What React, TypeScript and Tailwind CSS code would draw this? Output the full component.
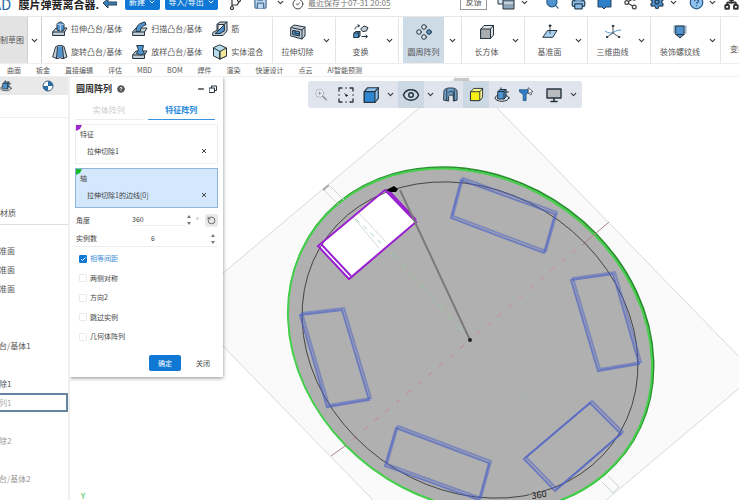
import React, { useState } from "react";
import {
  ChevronDown,
  CircleCheck,
  CircleHelp,
  Eye,
  Minus,
  Network,
  Printer,
  RotateCcw,
  Save,
  Search,
  Settings,
  Share2,
} from "lucide-react";

const INK = "#26343f";
const BLUE = "#4f93cf";
const PALE = "#c3cdd6";

type IconProps = { className?: string };

function Glyph({ className = "size-4", children }: { className?: string; children: React.ReactNode }) {
  return (
    <svg viewBox="0 0 16 16" className={`${className} shrink-0`} fill="none" stroke={INK} strokeWidth="1" strokeLinejoin="round" strokeLinecap="round" aria-hidden="true">
      {children}
    </svg>
  );
}

const Base = () => <path d="M1 10.5 4 7h11l-2.5 4v3.5H1z M1 11h11.5" fill={PALE} />;

const ExtrudeIcon = () => (
  <Glyph>
    <Base />
    <path d="M5 3v6l4 1.3L12 9V3L9 1z" fill={BLUE} />
    <path d="M5 3l3.5 1L12 3 M8.5 4v6" stroke="#dcebf8" strokeWidth=".7" />
  </Glyph>
);
const RevolveIcon = () => (
  <Glyph>
    <path d="M4 2.5C6 1 10 1 12 2.5L15 13l-4 1.7-3-1-3 1L1 13z" fill={PALE} />
    <path d="M6 2.5h4l1.5 11-3.5-.8-3.5.8z" fill={BLUE} stroke="none" />
    <path d="M5.5 3 4.5 14 M10.5 3l1 11" />
  </Glyph>
);
const SweepIcon = () => (
  <Glyph>
    <Base />
    <path d="M4 10c0-5 3-8 9-9l1 3c-4 .7-5.500 3-5.500 6z" fill={BLUE} />
  </Glyph>
);
const LoftIcon = () => (
  <Glyph>
    <Base />
    <path d="M5 1.500h6.500L10.500 6l2 3.500-4 1.500-4-1.500 1.800-3.500z" fill={BLUE} />
  </Glyph>
);
const RibIcon = () => (
  <Glyph>
    <path d="M1 11.500 5 9V3l3-2h7v9l-4 4.500H1z" fill={PALE} />
    <path d="M6 10V3.500h6V10z" fill="#eef2f5" />
    <path d="M12 4 6 10l-3 2.500h5L12 10z" fill={BLUE} />
    <path d="M12 3.500 15 1" />
  </Glyph>
);
const BlendIcon = () => (
  <Glyph>
    <path d="M8 1 14.500 4v8L8 15 1.500 12V4z" fill="#b9dcea" />
    <path d="M8 7.500 14.500 4v8L8 15z" fill="#f1e597" />
    <path d="M1.500 4 8 7.500V15" />
  </Glyph>
);
const CutIcon = () => (
  <Glyph>
    <path d="M1 3.500 4 1l11 2v9l-3 3L1 12z" fill={PALE} />
    <path d="M1 3.500 12 6v9 M12 6l3-3" />
    <path d="M3 6.500l6.500 1.200V12L3 10.700z" fill={BLUE} />
    <path d="M5 7v2.300l4.500.8" />
  </Glyph>
);
const TransformIcon = () => (
  <Glyph>
    <path d="M1 9l1.500-1.500H7V12L5.500 13.500H1z M1 9h4.500v4.500 M5.500 9 7 7.500" fill={BLUE} />
    <path d="M8 4.500 11 2l4 1.500L13.500 7 10 7.500z" fill={PALE} />
    <path d="M2 5c.5-2 2-3 4-3.300 M5 .8l1.500.7-1 1.500 M9 12.500h5 M12.800 11l1.700 1.500-1.700 1.500" />
  </Glyph>
);
const CircularIcon = () => (
  <Glyph>
    <circle cx="8" cy="3" r="2.300" fill="#dce5ec" />
    <circle cx="3" cy="8" r="2.300" fill="#dce5ec" />
    <circle cx="13" cy="8" r="2.300" fill={BLUE} />
    <circle cx="8" cy="13" r="2.300" fill="#dce5ec" />
  </Glyph>
);
const BoxIcon = ({ className, front = "#a9adb0", top = "#dde0e2" }: IconProps & { front?: string; top?: string }) => (
  <Glyph className={className}>
    <path d="M2 5 5 1.500h9.500V11L11.500 14.500H2z" fill={top} />
    <path d="M2 5h9.500v9.500H2z" fill={front} />
    <path d="M11.500 5 14.500 1.500" />
  </Glyph>
);
const PlaneIcon = () => (
  <Glyph>
    <path d="M1 13 5.500 6.500H15L11 13z" fill="#a9d0ef" />
    <path d="M8 9.500V2" strokeWidth=".8" />
    <circle cx="8" cy="1.700" r=".9" fill={INK} />
  </Glyph>
);
const CurveIcon = () => (
  <Glyph>
    <path d="M0 7c4 3 7 2 9 1s4-2 7-2" stroke={BLUE} />
    <path d="M8 2v7l-6 4 M8 9l6 4" strokeWidth=".8" />
    <circle cx="8" cy="2" r=".8" fill={INK} />
    <circle cx="2" cy="13" r=".7" fill={INK} />
    <circle cx="14" cy="13" r=".7" fill={INK} />
  </Glyph>
);
const ThreadIcon = () => (
  <Glyph>
    <path d="M2 2h12v7H2z" fill="#b7d3ea" stroke="#7c9cb6" strokeDasharray="1 1" />
    <path d="M4 2h8v8.500L8 14l-4-3.500z" fill={BLUE} />
    <path d="M4 10.500h8" />
  </Glyph>
);
const SectionIcon = ({ className }: IconProps) => (
  <Glyph className={className}>
    <path d="M1 4.500C1 2 4 1 8 1s7 1 7 3.500V14l-4 1v-5c0-2-5-2-5 0v5l-5-1z" fill="#6d9fc7" />
    <path d="M4 2.500v12 M12 2.500v12 M6 6c0-2 5-2 5 0v4" />
  </Glyph>
);
const OrbitPartIcon = ({ className }: IconProps) => (
  <Glyph className={className}>
    <ellipse cx="8" cy="11" rx="7" ry="3.300" />
    <path d="M4 4.500 6 2.500h6V10l-2 2H4z M4 4.500h6V12 M10 4.500l2-2" fill={BLUE} />
    <path d="M7 2.500V.8 M12 5h2.500" />
  </Glyph>
);
const FilterIcon = ({ className }: IconProps) => (
  <Glyph className={className}>
    <path d="M0 3h11v1.500L7.500 8v6.500h-3V8L0 4.500z" fill="#2f7fc8" stroke="#2a5d8e" />
    <path d="M10 1l5 4-2.500.5 1 2.500-1.500.5-1-2.500-1 1z" fill="#ffffff" strokeWidth=".7" />
  </Glyph>
);
const MonitorIcon = ({ className }: IconProps) => (
  <Glyph className={className}>
    <path d="M1 2h14v9H1z" fill="#b9bdc0" strokeWidth="1.400" />
    <path d="M8 11v3 M5 14.500h6" strokeWidth="1.600" />
  </Glyph>
);
const FitIcon = ({ className }: IconProps) => (
  <Glyph className={className}>
    <path d="M1 4V1h3 M12 1h3v3 M15 12v3h-3 M4 15H1v-3" strokeWidth="1.300" />
    <path d="M1 8h.1 M15 8h.1 M8 1h.1 M8 15h.1" strokeWidth="1.500" />
    <circle cx="8.500" cy="8.500" r=".8" fill={INK} />
    <path d="M6.500 6.500l2 2" strokeWidth=".8" />
  </Glyph>
);
const ZoomIcon = ({ className }: IconProps) => (
  <Glyph className={className}>
    <circle cx="6.500" cy="6" r="4.500" stroke="#a3abb4" fill="#f4f6f8" />
    <path d="M10 9.500l4 4" stroke="#8b949e" strokeWidth="1.800" />
    <path d="M6.500 4v4 M4.500 6h4" stroke="#8b949e" />
  </Glyph>
);
const RestoreIcon = () => (
  <Glyph className="size-2">
    <path d="M1 6h10v9H1z M5 6V2h10v9h-4" strokeWidth="2" />
  </Glyph>
);

function Chevron() {
  return <ChevronDown className="size-[9px] shrink-0 text-[#2f3840]" strokeWidth={3} aria-hidden="true" />;
}

const features = [
  [
    { label: "拉伸凸台/基体", Icon: ExtrudeIcon },
    { label: "旋转凸台/基体", Icon: RevolveIcon },
  ],
  [
    { label: "扫描凸台/基体", Icon: SweepIcon },
    { label: "放样凸台/基体", Icon: LoftIcon },
  ],
  [
    { label: "筋", Icon: RibIcon },
    { label: "实体混合", Icon: BlendIcon },
  ],
];

const tools = [
  { label: "拉伸切除", Icon: CutIcon },
  { label: "变换", Icon: TransformIcon },
  { label: "圆周阵列", Icon: CircularIcon, active: true },
  { label: "长方体", Icon: BoxIcon },
  { label: "基准面", Icon: PlaneIcon },
  { label: "三维曲线", Icon: CurveIcon },
  { label: "装饰螺纹线", Icon: ThreadIcon, wide: true },
];

const tabs = ["曲面", "钣金", "直接编辑", "评估", "MBD", "BOM", "焊件", "渲染", "快速设计", "点云", "AI智能预测"];

function TitleBar() {
  return (
    <header className="flex h-[17px] shrink-0 items-end overflow-hidden border-b border-[#e6e6e6] pb-[6px] whitespace-nowrap">
      <span className="-ml-2 w-[27px] text-[15px] leading-[12px] text-[#2b6ca8]">AD</span>
      <h1 className="w-[86px] text-[11px] leading-[11px] font-bold text-[#222]">膜片弹簧离合器.</h1>
      <button aria-label="返回" className="w-[22px]">
        <svg viewBox="0 0 14 14" className="size-[14px]" aria-hidden="true">
          <path d="M0 7l5-4v3h9v3H5v3z" fill="#3f7fb8" stroke="#23445f" />
        </svg>
      </button>
      <button className="mr-[5px] flex h-5 w-9 items-center justify-center gap-[3px] rounded-[2px] bg-[#0f78d4] pt-1 text-[8px] text-white">
        新建
        <ChevronDown className="size-2" strokeWidth={3} />
      </button>
      <button className="mr-3 flex h-5 w-[54px] items-center justify-center gap-[3px] rounded-[2px] bg-[#0f78d4] pt-1 text-[8px] text-white">
        导入/导出
        <ChevronDown className="size-2" strokeWidth={3} />
      </button>
      <button aria-label="分支" className="mr-3">
        <svg viewBox="0 0 11 14" className="h-[14px] w-[11px]" fill="none" stroke="#333" strokeWidth="1.200" aria-hidden="true">
          <circle cx="2" cy="12" r="1.500" />
          <path d="M2 10.500V3 M2 9h5l2-3V3" />
          <circle cx="9" cy="4" r="1.500" fill="#fff" />
        </svg>
      </button>
      <button aria-label="保存" className="mr-[6px] flex items-end gap-2">
        <Save className="size-[15px] fill-[#bcd6ee] text-[#4c7299]" strokeWidth={2} />
        <span className="pb-[3px]"><Chevron /></span>
      </button>
      <CircleCheck className="mr-1 ml-[1px] size-3 text-[#444]" />
      <span className="w-[155px] pb-[3px] text-[8px] leading-[9px] text-[#777]">
        <span className="border-b border-[#999]">最近保存于07-31 20:05</span>
      </span>
      <button className="mr-[10px] w-[27px] border border-[#999] pb-[2px] text-[8px] leading-[10px] text-[#444]">反馈</button>
      <button aria-label="窗口" className="mr-4 flex items-end gap-[5px]">
        <svg viewBox="0 0 18 16" className="h-4 w-[18px]" stroke={INK} aria-hidden="true">
          <path d="M1 1h12v9H1z" fill="#d5e5f2" />
          <path d="M6 6h11v9H6z" fill="#8fa5b8" />
          <path d="M7 9h9" stroke="#fff" />
        </svg>
        <span className="pb-[3px]"><Chevron /></span>
      </button>
      <div className="flex items-end gap-[11px]">
        <button aria-label="搜索"><Search className="size-[15px] fill-[#4f93cf] text-[#2a5d8e]" strokeWidth={2} /></button>
        <button aria-label="打印"><Printer className="size-[15px] fill-[#8fbfe8] text-[#28435c]" strokeWidth={2} /></button>
        <button aria-label="批注">
          <svg viewBox="0 0 15 15" className="size-[15px]" aria-hidden="true"><path d="M1 1h13v11H9l-2 2-2-2H1z" fill="#2f7fc8" stroke="#28435c" /></svg>
        </button>
        <button aria-label="分享"><Share2 className="size-[15px] text-[#444]" /></button>
        <button aria-label="设置" className="flex items-end gap-1">
          <Settings className="size-4 fill-[#4f93cf] text-[#28435c]" />
          <span className="pb-[3px]"><Chevron /></span>
        </button>
        <button aria-label="帮助" className="flex items-end gap-1">
          <CircleHelp className="size-[15px] fill-[#8fc1ec] text-[#2a5d8e]" />
          <span className="pb-[3px]"><Chevron /></span>
        </button>
        <button aria-label="结构"><Network className="-ml-1 size-[15px] text-[#333]" strokeWidth={3} /></button>
      </div>
    </header>
  );
}

function Ribbon() {
  return (
    <div className="flex h-[47px] shrink-0 overflow-hidden border-b border-[#eeeeee] text-[8px] leading-3 whitespace-nowrap text-[#555]">
      <div className="flex w-[42px] shrink-0 border-r border-[#cfcfcf]">
        <button className="w-[27px] bg-[#e3e3e3] text-left">制草图</button>
        <button aria-label="绘制草图选项" className="flex flex-1 items-center justify-center border-l border-[#cfcfcf]"><Chevron /></button>
      </div>
      <div className="flex w-[231px] shrink-0 gap-[10px] border-r border-[#e4e4e4] pl-[10px]">
        {features.map((column, i) => (
          <div key={i} className="flex flex-col justify-around">
            {column.map(({ label, Icon }) => (
              <button key={label} className="flex items-center gap-[3px]">
                <Icon />
                {label}
              </button>
            ))}
          </div>
        ))}
      </div>
      {tools.map(({ label, Icon, active, wide }) => (
        <div key={label} className={`flex shrink-0 border-r border-[#e4e4e4] pl-1 ${wide ? "w-[70px]" : "w-[63px]"}`}>
          <button className={`flex flex-col items-center gap-[6px] pt-[7px] ${wide ? "w-[50px]" : "w-[41px]"} ${active ? "bg-[#cddbe6]" : ""}`}>
            <Icon />
            {label}
          </button>
          <button aria-label={`${label}选项`} className="flex flex-1 items-center justify-center"><Chevron /></button>
        </div>
      ))}
      <button className="pt-[18px] pl-[9px]">变换</button>
    </div>
  );
}

function Sidebar() {
  const rows = ["准面", "准面", "准面", "", "", "台/基体1", "", "除1", "列1", "", "除2", "", "台/基体2"];
  return (
    <aside className="w-[70px] shrink-0 overflow-hidden border-r-2 border-[#efefef] text-[8px] whitespace-nowrap text-[#555]">
      <div className="flex h-[18px] items-center gap-[30px] bg-[#e9e9e9]">
        <OrbitPartIcon className="size-3" />
        <svg viewBox="0 0 12 12" className="size-3" aria-hidden="true">
          <circle cx="6" cy="6" r="5" fill="#fff" stroke="#385f80" />
          <path d="M6 6V1a5 5 0 0 1 5 5z M6 6v5a5 5 0 0 1-5-5z" fill="#2c6ca5" />
        </svg>
      </div>
      <div className="h-[23px] border-b border-[#eeeeee]" />
      <div className="flex h-[107px] items-end border-b border-[#dddddd] pb-[5px] leading-3">材质</div>
      <ul className="pt-4">
        {rows.map((text, i) => (
          <li
            key={i}
            className={`flex h-[19px] items-center ${text === "列1" ? "border-2 border-l-0 border-[#66839f] text-[#aaa]" : i > 8 ? "text-[#999]" : ""}`}
          >
            <span className="-ml-px">{text}</span>
          </li>
        ))}
      </ul>
    </aside>
  );
}

function Spinner() {
  return (
    <span className="flex flex-col gap-1 text-[#777]" aria-hidden="true">
      <svg viewBox="0 0 6 3" className="h-[3px] w-[6px]"><path d="M1 3 3 0l2 3z" fill="currentColor" /></svg>
      <svg viewBox="0 0 6 3" className="h-[3px] w-[6px]"><path d="M1 0l2 3 2-3z" fill="currentColor" /></svg>
    </span>
  );
}

function Selection({ title, item, active }: { title: string; item: string; active?: boolean }) {
  return (
    <section className={`relative h-10 border pt-1 pl-1 ${active ? "border-[#8fb4da] bg-[#d4e8fd]" : "border-[#ececec]"}`}>
      <svg viewBox="0 0 6 6" className="absolute top-0 left-0 size-[6px]" aria-hidden="true">
        <path d="M0 0h6L4 4 0 6z" fill={active ? "#19b92f" : "#9d28cf"} />
      </svg>
      <h2 className="leading-[10px]">{title}</h2>
      <div className="mt-[7px] flex items-center justify-between pr-[11px] pl-[7px] leading-[10px]">
        {item}
        <button aria-label={`移除${item}`}>
          <svg viewBox="0 0 4 4" className="size-1" stroke="#444" aria-hidden="true"><path d="M0 0l4 4 M4 0 0 4" /></svg>
        </button>
      </div>
    </section>
  );
}

function PatternPanel() {
  const [checked, setChecked] = useState([true, false, false, false, false]);
  const options = ["相等间距", "两侧对称", "方向2", "跳过实例", "几何体阵列"];
  return (
    <form className="relative h-[300px] w-[153px] shrink-0 bg-white px-[5px] text-[7px] text-[#444] shadow-[0_1px_4px_rgba(0,0,0,0.45)]" onSubmit={(e) => e.preventDefault()}>
      <div className="flex h-[23px] items-center pr-[1px] pl-px">
        <h2 className="text-[9px] font-bold text-[#333]">圆周阵列</h2>
        <CircleHelp className="ml-[5px] size-2 fill-[#555] text-[#555] [&>path]:text-white" strokeWidth={3} aria-hidden="true" />
        <button type="button" aria-label="最小化" className="ml-auto"><Minus className="size-2" strokeWidth={4} /></button>
        <button type="button" aria-label="还原" className="ml-1"><RestoreIcon /></button>
      </div>
      <div className="mb-1 flex h-5 gap-[5px] pr-[3px] text-[8px]" role="tablist">
        <button type="button" role="tab" aria-selected={false} className="flex-1 border-b border-[#ececec] text-[#ccc]">实体阵列</button>
        <button type="button" role="tab" aria-selected={true} className="flex-1 border-b border-[#3b94dd] font-bold text-[#2587dc]">特征阵列</button>
      </div>
      <div className="flex flex-col gap-1">
        <Selection title="特征" item="拉伸切除1" />
        <Selection title="轴" item="拉伸切除1的边线[0]" active />
      </div>
      <div className="mt-1 flex h-4 items-center">
        <label htmlFor="angle" className="w-[57px] pl-px">角度</label>
        <input id="angle" defaultValue="360" className="w-[54px] min-w-0 border-b border-[#eeeeee] outline-none" />
        <Spinner />
        <span className="w-[13px] pl-1">°</span>
        <button type="button" aria-label="反转方向" className="flex size-[13px] items-center justify-center rounded-[2px] bg-[#e9e9e9]">
          <RotateCcw className="size-[9px] text-[#444]" />
        </button>
      </div>
      <div className="mt-[3px] mb-[2px] flex h-4 items-center border-b border-[#eeeeee]">
        <label htmlFor="count" className="w-[76px] pl-px">实例数</label>
        <input id="count" defaultValue="6" className="min-w-0 flex-1 outline-none" />
        <span className="pr-[2px]"><Spinner /></span>
      </div>
      <div className="flex flex-col pl-1">
        {options.map((label, i) => (
          <label key={label} className={`flex items-center gap-[3px] ${i % 2 ? "h-5" : "h-[19px]"} ${checked[i] ? "text-[#3e8fd4]" : ""}`}>
            <span className="relative size-2">
              <input
                type="checkbox"
                checked={checked[i]}
                onChange={() => setChecked(checked.map((v, n) => (n === i ? !v : v)))}
                className="block size-2 appearance-none rounded-[1px] border border-[#e9e9e9] checked:border-[#0f78d4] checked:bg-[#0f78d4]"
              />
              {checked[i] && (
                <svg viewBox="0 0 8 8" className="pointer-events-none absolute inset-0 size-2" aria-hidden="true">
                  <path d="M2 4l1.500 1.500L6.500 2.500" fill="none" stroke="#fff" />
                </svg>
              )}
            </span>
            {label}
          </label>
        ))}
      </div>
      <div className="mt-[9px] flex justify-end gap-2 pr-[1px]">
        <button type="submit" className="h-4 w-8 rounded-[2px] bg-[#0f78d4] text-white">确定</button>
        <button type="button" className="h-4 w-7">关闭</button>
      </div>
    </form>
  );
}

function ViewToolbar() {
  return (
    <div className="relative ml-[85px] flex h-[27px] shrink-0 rounded-[3px] bg-[#e0e4ed] pl-[1px]" role="toolbar" aria-label="视图">
      <div className="absolute -top-[3px] left-[146px] h-[3px] w-[15px] rounded-t-[2px] bg-[#c9c9c9]" />
      <button aria-label="缩放" className="flex w-6 items-center justify-center"><ZoomIcon className="size-[14px]" /></button>
      <button aria-label="适合窗口" className="flex w-[26px] items-center justify-center"><FitIcon className="size-4" /></button>
      <button aria-label="显示模式" className="flex w-6 items-center justify-center"><BoxIcon className="size-[18px]" front="#2f86d2" top="#8dc0ec" /></button>
      <button aria-label="显示模式选项" className="flex w-[15px] items-center justify-center"><Chevron /></button>
      <button aria-label="可见性" className="flex w-[26px] items-center justify-center bg-[#ccd9e5]"><Eye className="size-[18px] text-[#26343f]" /></button>
      <button aria-label="可见性选项" className="flex w-[13px] items-center justify-center"><Chevron /></button>
      <button aria-label="剖切" className="flex w-[26px] items-center justify-center"><SectionIcon className="size-[15px]" /></button>
      <button aria-label="着色" className="flex w-[26px] items-center justify-center bg-[#ccd9e5]"><BoxIcon className="size-[15px]" front="#f7ee14" top="#fff98a" /></button>
      <button aria-label="旋转" className="flex w-[25px] items-center justify-center"><OrbitPartIcon className="size-4" /></button>
      <button aria-label="筛选" className="flex w-6 items-center justify-center"><FilterIcon className="size-[15px]" /></button>
      <button aria-label="显示" className="flex w-[31px] items-center justify-center"><MonitorIcon className="size-4" /></button>
      <button aria-label="显示选项" className="mr-1 flex w-[9px] items-center justify-center"><Chevron /></button>
    </div>
  );
}

const slots = [
  "461,180 555,214 544,253 451,218",
  "571,280 613,274 639,364 598,371",
  "590,403 621,434 555,491 524,459",
  "396,428 489,463 479,500 385,466",
  "300,315 342,310 369,400 327,407",
];

function Model() {
  return (
    <svg viewBox="70 77 669 423" preserveAspectRatio="xMinYMin slice" className="absolute inset-0 size-full" fill="none" aria-label="圆周阵列模型">
      <path d="M462 72 756 374 478 608 184 306z" fill="#fafafa" stroke="#d8d8d8" />
      <g transform="matrix(126 -106 134 137 471 339)">
        <circle r=".992" stroke="#2c8a31" strokeWidth="2" vectorEffect="non-scaling-stroke" />
      </g>
      <g transform="matrix(126 -106 134 137 470 340)">
        <circle r=".99" fill="#b0b0b0" stroke="#43cf4a" strokeWidth="2" vectorEffect="non-scaling-stroke" />
      </g>
      <path d="M385 190 416 222 349 279 318 246z" fill="#fff" />
      <path d="M324 190 338 204 M330 186 344 200" stroke="#d3d3d3" />
      <path d="M323 190 329 185" stroke="#aaa" strokeWidth="2" />
      <path d="M391 252 470 340" stroke="#9dcba2" strokeDasharray="9 5" />
      <path d="M352 216 379 248 M358 212 386 242" stroke="#d8d8d8" />
      <path d="M356 219 384 246" stroke="#a5d8aa" strokeDasharray="5 5" />
      <path d="M470 340 588 461" stroke="#a3bfa5" strokeDasharray="6 9" />
      <path d="M602 482 613 493 M608 476 619 487 M613 493 619 487" stroke="#c5d8c7" />
      <path d="M470 340 345 446" stroke="#cf8086" strokeDasharray="5 9" strokeDashoffset="-8" />
      <path d="M470 340 582 244" stroke="#cf8d90" strokeDasharray="5 9" strokeDashoffset="-8" />
      <path d="M331 456 345 446 M582 245 609 222" stroke="#b08484" />
      <g transform="matrix(126 -106 134 137 470 340)">
        <circle r=".913" stroke="#444" strokeWidth="1" vectorEffect="non-scaling-stroke" />
      </g>
      {slots.map((points) => (
        <g key={points} stroke="#4a60c8" strokeOpacity=".65" strokeWidth="2">
          <polygon points={points} />
          <polygon points={points} transform="translate(2 -2)" strokeOpacity=".5" />
        </g>
      ))}
      <g stroke="#981fd0" strokeWidth="2">
        <path d="M385 190 416 222 349 279 318 246z" />
        <path d="M388 190 416 220 M321 244 351 276" strokeWidth="2" />
      </g>
      <path d="M400 190 470 340" stroke="#7a7a7a" strokeWidth="2" />
      <path d="M386 190 394 186 398 189 396 192 391 192z" fill="#000" />
      <circle cx="470" cy="340" r="2" fill="#222" />
      <path d="M529 497 551 492" stroke="#b0b0b0" strokeWidth="4" />
      <text x="532" y="499" transform="rotate(-8 532 499)" fill="#111" fontSize="9">360</text>
      <text x="81" y="499" fill="#69cf78" fontSize="7" fontWeight="700">Y</text>
    </svg>
  );
}

export default function App() {
  return (
    <div className="flex h-screen flex-col overflow-hidden bg-white font-['Noto_Sans_CJK_SC','Noto_Sans',sans-serif]">
      <TitleBar />
      <Ribbon />
      <nav className="flex h-[13px] shrink-0 items-center gap-[15px] border-b border-[#f0f0f0] pl-[7px] text-[7px] whitespace-nowrap text-[#555]">
        {tabs.map((tab) => (
          <button key={tab}>{tab}</button>
        ))}
      </nav>
      <div className="flex min-h-0 flex-1">
        <Sidebar />
        <main className="relative flex min-w-0 flex-1 overflow-hidden">
          <Model />
          <PatternPanel />
          <div className="pt-1"><ViewToolbar /></div>
        </main>
      </div>
    </div>
  );
}
